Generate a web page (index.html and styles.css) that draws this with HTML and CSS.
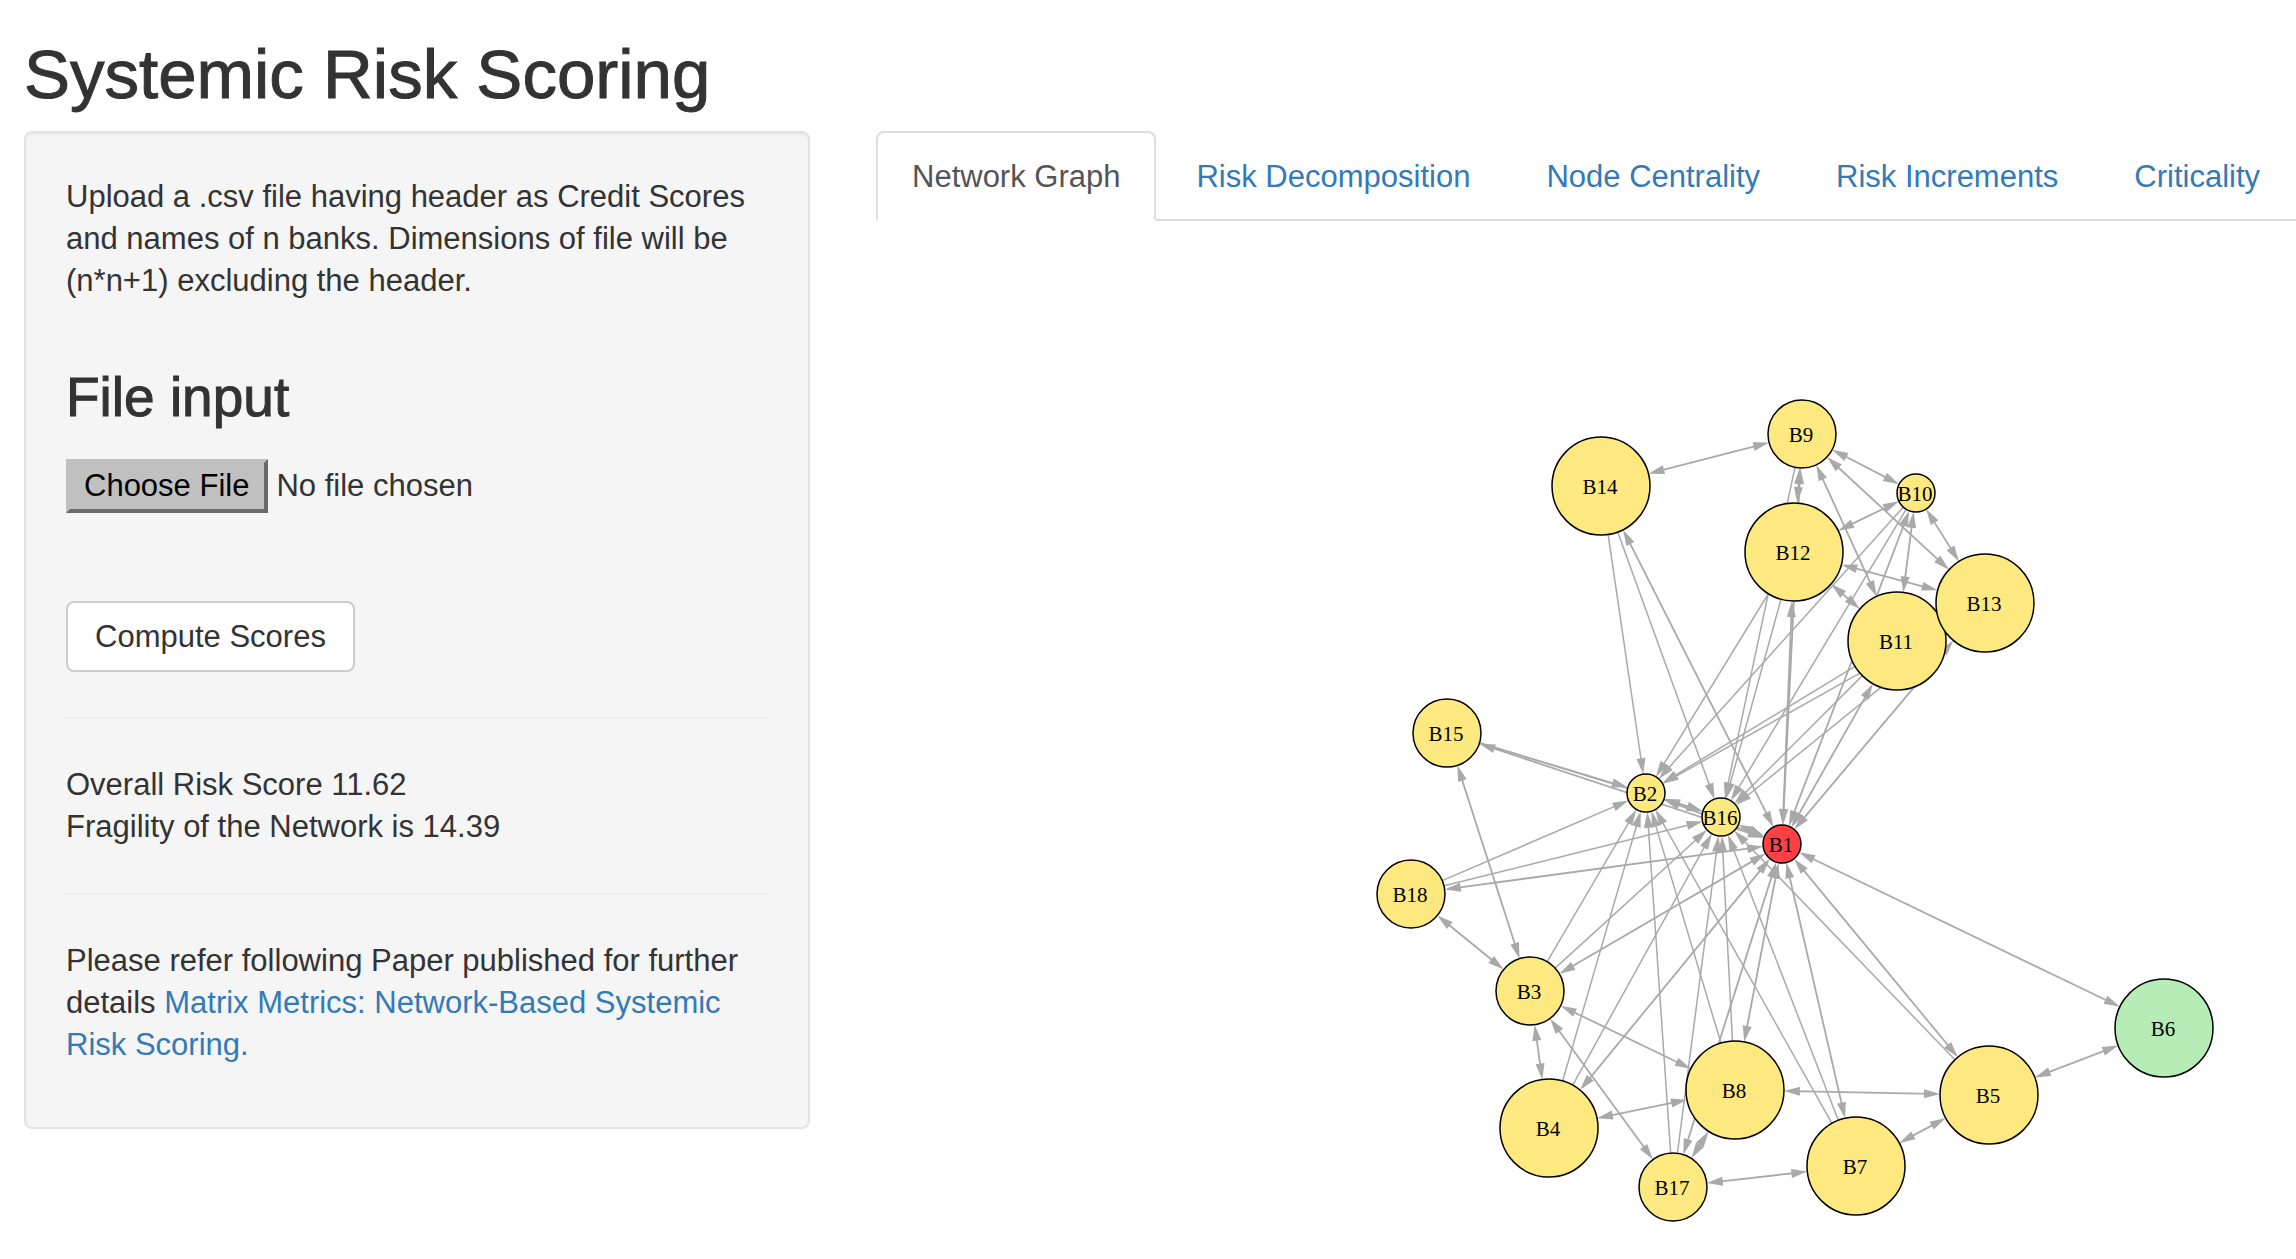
FILE: index.html
```html
<!DOCTYPE html>
<html lang="en">
<head>
<meta charset="utf-8">
<meta name="viewport" content="width=device-width, initial-scale=1">
<title>Systemic Risk Scoring</title>
<link rel="stylesheet" href="styles.css">
</head>
<body>
<div class="container">
  <h1 class="page-title">Systemic Risk Scoring</h1>
  <div class="layout">
    <form class="sidebar">
      <p class="text">Upload a .csv file having header as Credit Scores and names of n banks. Dimensions of file will be (n*n+1) excluding the header.</p>
      <h2 class="section-title"><label for="file">File input</label></h2>
      <input class="file" type="file" id="file" accept=".csv">
      <button class="btn" type="button">Compute Scores</button>
      <hr class="rule">
      <p class="text">Overall Risk Score 11.62<br>Fragility of the Network is 14.39</p>
      <hr class="rule">
      <p class="text">Please refer following Paper published for further details <a class="link" href="#paper">Matrix Metrics: Network-Based Systemic Risk Scoring.</a></p>
    </form>
    <main class="main">
      <nav class="tabs">
        <a class="tab tab-active" href="#network">Network Graph</a>
        <a class="tab" href="#decomposition">Risk Decomposition</a>
        <a class="tab" href="#centrality">Node Centrality</a>
        <a class="tab" href="#increments">Risk Increments</a>
        <a class="tab" href="#criticality">Criticality</a>
      </nav>
      <svg class="graph" id="graph" viewBox="0 0 1420 1034" role="img" aria-label="Network graph of banks"></svg>
    </main>
  </div>
</div>
<script src="graph.js"></script>
</body>
</html>
```
FILE: styles.css
```css
* {
  box-sizing: border-box;
}

body {
  margin: 0;
  background: #fff;
  color: #333;
  font-family: "Liberation Sans", Arial, sans-serif;
  font-size: 31px;
  line-height: 42px;
  overflow-x: hidden;
}

.container {
  padding: 40px 0 0 24px;
}

.page-title {
  margin: 0 0 22px;
  font-size: 69px;
  font-weight: 400;
  line-height: 69px;
  -webkit-text-stroke: 1px #333;
}

.layout {
  display: grid;
  grid-template-columns: minmax(0, 786fr) minmax(0, 1420fr);
  gap: 66px;
  align-items: start;
}

.sidebar {
  display: flex;
  flex-direction: column;
  align-items: flex-start;
  padding: 43px 40px 61px;
  border: 2px solid #e3e3e3;
  border-radius: 8px;
  background: #f5f5f5;
  box-shadow: inset 0 2px 2px rgba(0, 0, 0, 0.05);
}

.text {
  margin: 0;
}

.section-title {
  margin: 67px 0 34px;
  font-size: 55px;
  font-weight: 400;
  line-height: 56px;
  -webkit-text-stroke: 1px #333;
}

.file {
  margin: 0 0 88px;
  font: inherit;
  line-height: 42px;
  color: #333;
}

.file::file-selector-button {
  margin: 0 8px 0 0;
  padding: 2px 15px 2px 14px;
  border: 4px solid;
  border-color: #c0c0c0 #6b6b6b #6b6b6b #c0c0c0;
  background: #c0c0c0;
  color: #000;
  font: inherit;
}

.btn {
  padding: 13px 27px 12px;
  border: 2px solid #ccc;
  border-radius: 8px;
  background: #fff;
  color: #333;
  font: inherit;
}

.rule {
  align-self: stretch;
  margin: 45px 0;
  border: 0;
  border-top: 2px solid #eee;
}

.link {
  color: #337ab7;
  text-decoration: none;
}

.tabs {
  display: flex;
  gap: 4px;
  border-bottom: 2px solid #ddd;
  white-space: nowrap;
}

.tab {
  margin-bottom: -2px;
  padding: 23px 34px 21px;
  border: 2px solid transparent;
  border-radius: 8px 8px 0 0;
  color: #337ab7;
  text-decoration: none;
}

.tab-active {
  border-color: #ddd #ddd #fff;
  background: #fff;
  color: #555;
}

.graph {
  display: block;
  width: 100%;
  margin-top: 2px;
}

.edge {
  stroke: #a9a9a9;
  stroke-width: 1.5;
}

.edge-mutual {
  stroke-width: 1.8;
}

.arrow {
  fill: #a9a9a9;
}

.node {
  fill: #fde980;
  stroke: #000;
  stroke-width: 1.5;
}

.node-high {
  fill: #ff4047;
}

.node-low {
  fill: #b6edb6;
}

.node-label {
  fill: #000;
  font-family: "Liberation Serif", "Times New Roman", serif;
  font-size: 21px;
  text-anchor: middle;
}
```
FILE: graph.js
```js
// Bank nodes: centre x, centre y, radius
const nodes = {
  B1: [906, 621, 19], B2: [770, 570, 19], B3: [654, 768, 34],
  B4: [673, 905, 49], B5: [1113, 872, 49], B6: [1288, 805, 49],
  B7: [980, 943, 49], B8: [859, 867, 49], B9: [926, 211, 34],
  B10: [1040, 270, 19], B11: [1021, 418, 49], B12: [918, 329, 49],
  B13: [1109, 380, 49], B14: [725, 263, 49], B15: [571, 510, 34],
  B16: [845, 594, 19], B17: [797, 964, 34], B18: [535, 671, 34]
};

// Exposures held in one direction only
const oneWay = {
  2: [3, 4, 7, 8, 10, 11, 12, 13, 14, 15, 17, 18],
  16: [3, 4, 5, 7, 8, 9, 10, 11, 12, 13, 14, 15, 17, 18]
};

// Exposures held in both directions
const mutual = {
  1: [2, 3, 4, 5, 6, 7, 8, 9, 10, 11, 12, 13, 14, 15, 16, 17, 18],
  2: [16],
  3: [4, 8, 15, 17, 18],
  4: [8],
  5: [6, 7, 8],
  7: [17],
  8: [17],
  9: [10, 11, 12, 13, 14],
  10: [11, 12, 13],
  11: [12],
  12: [13]
};

const ARROW_LENGTH = 16;
const ARROW_HALF = 4.5;
const graph = document.getElementById('graph');

function add(tag, attrs, text) {
  const el = document.createElementNS('http://www.w3.org/2000/svg', tag);
  for (const key in attrs) el.setAttribute(key, attrs[key]);
  if (text) el.textContent = text;
  graph.appendChild(el);
}

function arrow(x, y, ux, uy) {
  const bx = x - ux * ARROW_LENGTH;
  const by = y - uy * ARROW_LENGTH;
  const px = -uy * ARROW_HALF;
  const py = ux * ARROW_HALF;
  add('polygon', {
    class: 'arrow',
    points: `${x},${y} ${bx + px},${by + py} ${bx - px},${by - py}`
  });
}

function edge(from, to, both) {
  const [x1, y1, r1] = nodes['B' + from];
  const [x2, y2, r2] = nodes['B' + to];
  const d = Math.hypot(x2 - x1, y2 - y1);
  const ux = (x2 - x1) / d;
  const uy = (y2 - y1) / d;
  const start = r1 + (both ? 8 : 0);
  const end = r2 + 8;
  add('line', {
    class: both ? 'edge edge-mutual' : 'edge',
    x1: x1 + ux * start, y1: y1 + uy * start,
    x2: x2 - ux * end, y2: y2 - uy * end
  });
  arrow(x2 - ux * r2, y2 - uy * r2, ux, uy);
  if (both) arrow(x1 + ux * r1, y1 + uy * r1, -ux, -uy);
}

for (const to in oneWay) oneWay[to].forEach(from => edge(from, to, false));
for (const from in mutual) mutual[from].forEach(to => edge(from, to, true));

for (let i = 1; i <= 18; i++) {
  const [x, y, r] = nodes['B' + i];
  const tone = i === 1 ? ' node-high' : i === 6 ? ' node-low' : '';
  add('circle', { class: 'node' + tone, cx: x, cy: y, r });
  add('text', { class: 'node-label', x: x - 1, y: y + 8 }, 'B' + i);
}
```
